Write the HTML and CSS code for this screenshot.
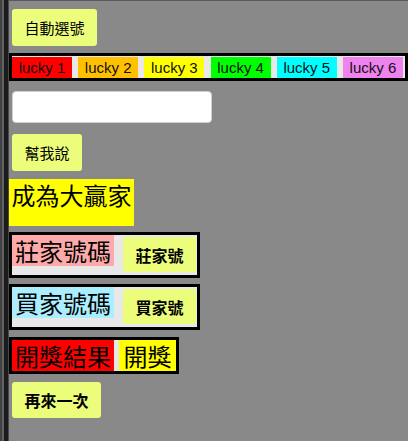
FILE: index.html
```html
<!DOCTYPE html>
<html lang="zh-Hant">
<head>
<meta charset="utf-8">
<title>lucky</title>
<link rel="stylesheet" href="styles.css">
</head>
<body>
<div class="page">
  <button class="btn btn-auto">自動選號</button>
  <div class="lucky-row">
    <span class="lucky l1">lucky 1</span>
    <span class="lucky l2">lucky 2</span>
    <span class="lucky l3">lucky 3</span>
    <span class="lucky l4">lucky 4</span>
    <span class="lucky l5">lucky 5</span>
    <span class="lucky l6">lucky 6</span>
  </div>
  <input class="field" type="text">
  <button class="btn btn-say">幫我說</button>
  <div class="title">成為大贏家</div>
  <div class="box box-first">
    <span class="label label-pink">莊家號碼</span>
    <button class="btn btn-bold btn-in">莊家號</button>
  </div>
  <div class="box box-second">
    <span class="label label-cyan">買家號碼</span>
    <button class="btn btn-bold btn-in">買家號</button>
  </div>
  <div class="box box-result">
    <span class="label label-red">開獎結果</span>
    <span class="label label-yellow">開獎</span>
  </div>
  <button class="btn btn-bold btn-again">再來一次</button>
</div>
</body>
</html>
```

FILE: styles.css
```css
html, body {
  margin: 0;
  padding: 0;
}
body {
  width: 408px;
  height: 441px;
  overflow: hidden;
  background:
    linear-gradient(#5a5a5a, #5a5a5a) 9px 0 / 100% 1px no-repeat,
    linear-gradient(to right, #424242 0 2px, #626262 2px 4px, #1c1c1c 4px 8px, #4a4a4a 8px 9px, #898989 9px);
  font-family: "Noto Sans CJK TC", "Liberation Sans", sans-serif;
  color: #000;
}
.page {
  display: flex;
  flex-direction: column;
  align-items: flex-start;
  padding: 9px 0 0 9px;
}
.btn {
  border: none;
  border-radius: 3px;
  background: #ecfd7b;
  color: #000;
  font-family: "Noto Sans CJK TC", sans-serif;
  font-size: 15px;
  line-height: 20px;
  padding: 0 12.5px;
  margin: 0 0 0 3px;
  height: 37px;
  cursor: pointer;
}
.btn-bold {
  font-weight: 700;
  font-size: 16px;
  padding: 0 12.5px;
}
.lucky-row {
  align-self: stretch;
  display: flex;
  gap: 6.2px;
  margin-top: 7px;
  height: 28px;
  box-sizing: border-box;
  border: 3px solid #000;
  background: #e8e8e8;
}
.lucky {
  width: 60px;
  height: 21px;
  margin-top: 1px;
  font-family: "Liberation Sans", Arial, sans-serif;
  font-size: 15px;
  line-height: 21px;
  text-align: center;
  color: #111;
}
.l1 { background: #ff0000; }
.l2 { background: #ffc000; }
.l3 { background: #ffff00; }
.l4 { background: #00ff00; }
.l5 { background: #00ffff; }
.l6 { background: #ee82ee; }
.field {
  margin: 10px 0 0 3px;
  width: 200px;
  height: 32px;
  box-sizing: border-box;
  border: 1px solid #d0d0d0;
  border-radius: 4px;
  background: #fff;
  padding: 0 6px;
}
.btn-say {
  margin-top: 11px;
}
.title {
  margin-top: 8px;
  height: 47px;
  box-sizing: border-box;
  padding: 3px 2.5px 0;
  background: #ffff00;
  font-size: 24px;
  line-height: 26px;
}
.box {
  display: flex;
  align-items: flex-start;
  border: 3px solid #000;
  background: #e8e8e8;
}
.box-first { margin-top: 6px; }
.box-second { margin-top: 6px; }
.box-result { margin-top: 7px; }
.label {
  font-size: 24px;
  line-height: 25px;
  padding: 3px;
}
.label-pink { background: #ffaaaa; }
.label-cyan { background: #aaeeff; }
.label-red { background: #ff0000; }
.label-yellow {
  background: #ffff00;
  margin-left: 5px;
  padding: 3px 4.5px;
}
.btn-in {
  height: 35px;
  margin: 2px 1px 3px 9px;
}
.btn-again {
  margin-top: 8px;
  height: 36px;
}
```
